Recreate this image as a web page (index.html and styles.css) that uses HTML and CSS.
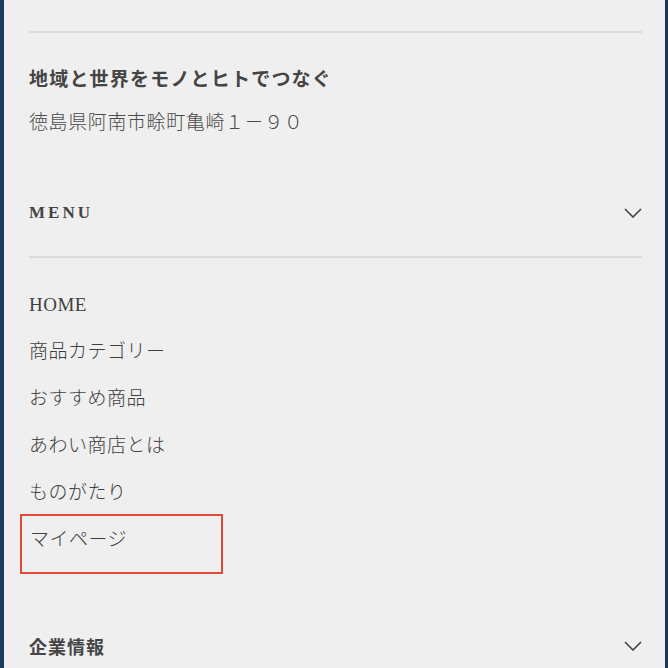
FILE: index.html
```html
<!DOCTYPE html>
<html lang="ja">
<head>
<meta charset="utf-8">
<link rel="stylesheet" href="styles.css">
</head>
<body>
<div class="frame">
  <div class="content">
    <hr class="rule rule-top">
    <div class="info">
      <p class="tagline">地域と世界をモノとヒトでつなぐ</p>
      <p class="address">徳島県阿南市畭町亀崎１－９０</p>
    </div>
    <div class="acc-head menu-head">
      <span class="menu-title">MENU</span>
      <svg class="chev" width="18" height="10" viewBox="0 0 18 10"><path d="M1 1 L9 9 L17 1" fill="none" stroke="#444" stroke-width="1.6"/></svg>
    </div>
    <hr class="rule">
    <ul class="menu">
      <li>HOME</li>
      <li>商品カテゴリー</li>
      <li>おすすめ商品</li>
      <li>あわい商店とは</li>
      <li>ものがたり</li>
      <li class="active"><span class="box">マイページ</span></li>
    </ul>
    <div class="acc-head corp-head">
      <span class="corp-title">企業情報</span>
      <svg class="chev" width="18" height="10" viewBox="0 0 18 10"><path d="M1 1 L9 9 L17 1" fill="none" stroke="#444" stroke-width="1.6"/></svg>
    </div>
  </div>
</div>
</body>
</html>
```

FILE: styles.css
```css
html, body {
  margin: 0;
  padding: 0;
  height: 100%;
  overflow: hidden;
}
body {
  background: #1b3b5a;
  font-family: "Liberation Serif", "Noto Sans CJK JP", serif;
  color: #3d3d3d;
}
.frame {
  margin: 0 3px 0 4px;
  height: 668px;
  background: #efefef;
}
.content {
  padding: 0 23px 0 25px;
}
.rule {
  border: 0;
  height: 2px;
  background: #dadada;
  margin: 0;
}
.rule-top {
  position: relative;
  top: 31px;
  margin-bottom: 31px;
}
.info {
  padding-top: 33px;
}
.tagline {
  margin: 0;
  font-size: 19px;
  font-weight: 700;
  line-height: 28px;
  color: #444;
  letter-spacing: 1.2px;
}
.address {
  margin: 15px 0 0;
  font-size: 19px;
  line-height: 28px;
  color: #4a4a4a;
  font-weight: 300;
  letter-spacing: 0.6px;
}
.acc-head {
  display: flex;
  align-items: center;
  justify-content: space-between;
}
.menu-head {
  margin-top: 64px;
  height: 24px;
  margin-bottom: 31px;
}
.menu-title {
  font-size: 17px;
  font-weight: 700;
  letter-spacing: 3px;
  color: #444;
}
.menu {
  list-style: none;
  margin: 0;
  padding: 33px 0 0;
}
.menu li {
  font-size: 19px;
  line-height: 28px;
  height: 47px;
  color: #3f3f3f;
  font-weight: 300;
  letter-spacing: 0.5px;
}
.menu li.active {
  height: auto;
}
.box {
  display: block;
  width: 191px;
  height: 46px;
  margin-left: -9px;
  margin-top: -12px;
  padding: 10px 0 0 8px;
  border: 2px solid #e04a36;
}
.corp-head {
  margin-top: 58px;
  height: 28px;
}
.corp-title {
  font-size: 18px;
  font-weight: 700;
  color: #444;
  letter-spacing: 1px;
}
```
